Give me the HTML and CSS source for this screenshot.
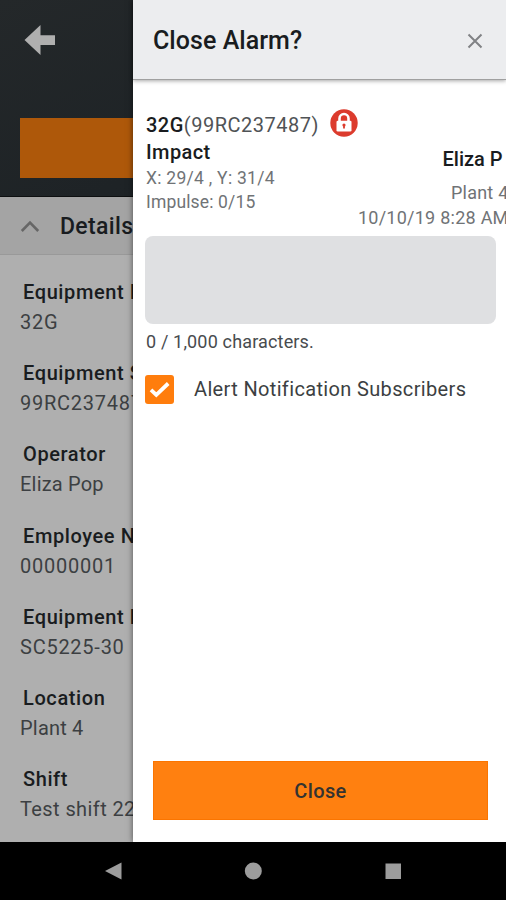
FILE: index.html
```html
<!DOCTYPE html>
<html lang="en">
<head>
<meta charset="utf-8">
<title>Close Alarm</title>
<link rel="stylesheet" href="styles.css">
</head>
<body>
<div class="screen">
  <div class="app">
    <div class="page">
      <div class="hero">
        <svg class="back" width="32" height="32" viewBox="0 0 32 32"><path d="M.5 16 16.500 1V11.200H31V21H16.500V31Z"/></svg>
        <div class="hero-action"></div>
      </div>
      <div class="section-head">
        <svg class="chevron" width="20" height="13" viewBox="0 0 20 13"><path d="M1.8 11 10 2.7 18.2 11"/></svg>
        <span class="section-title">Details</span>
      </div>
      <dl class="fields">
        <div class="field"><dt>Equipment ID</dt><dd class="code">32G</dd></div>
        <div class="field"><dt>Equipment Serial</dt><dd class="code">99RC237487</dd></div>
        <div class="field"><dt>Operator</dt><dd>Eliza Pop</dd></div>
        <div class="field"><dt>Employee Number</dt><dd class="code">00000001</dd></div>
        <div class="field"><dt>Equipment Model</dt><dd class="code">SC5225-30</dd></div>
        <div class="field"><dt>Location</dt><dd>Plant 4</dd></div>
        <div class="field"><dt>Shift</dt><dd class="wide">Test shift 22</dd></div>
      </dl>
    </div>
    <section class="drawer">
      <header class="drawer-head">
        <h1>Close Alarm?</h1>
        <svg class="dismiss" width="16" height="16" viewBox="0 0 16 16"><path d="M1.5 1.5 14.5 14.5M14.5 1.5 1.5 14.5"/></svg>
      </header>
      <div class="summary">
        <div class="left">
          <div class="equipment"><span><b>32G</b>(99RC237487)</span>
            <svg class="lock" width="28" height="28" viewBox="0 0 28 28"><circle cx="14" cy="14" r="13.7" fill="#dc3b2d"/><path d="M9.5 13V9.500a4.500 4.500 0 0 1 9 0V13" fill="none" stroke="#fff" stroke-width="2.6"/><rect x="6.500" y="11.800" width="15" height="10.700" rx="1.3" fill="#fff"/><circle cx="14" cy="16" r="1.6" fill="#dc3b2d"/><path d="M13.100 16h1.8v3.5h-1.8z" fill="#dc3b2d"/></svg>
          </div>
          <div class="kind">Impact</div>
          <div class="axes">X: 29/4 , Y: 31/4</div>
          <div class="impulse">Impulse: 0/15</div>
        </div>
        <div class="right">
          <div class="person">Eliza P</div>
          <div class="site">Plant 4</div>
          <div class="date">10/10/19 8:28 AM</div>
        </div>
      </div>
      <div class="comment"></div>
      <div class="count">0 / 1,000 characters.</div>
      <div class="notify">
        <span class="check"><svg width="29" height="29" viewBox="0 0 29 29"><path d="M6 14.800 11.300 19.800 23.200 8.500"/></svg></span>
        <span class="notify-label">Alert Notification Subscribers</span>
      </div>
      <div class="submit"><span>Close</span></div>
    </section>
  </div>
  <nav class="system">
    <svg width="506" height="58" viewBox="0 0 506 58"><path d="M105 29 121.500 20.500V37.500Z"/><circle cx="253.300" cy="29" r="8.500"/><rect x="385.500" y="21.500" width="15.500" height="15.500"/></svg>
  </nav>
</div>
</body>
</html>
```
FILE: styles.css
```css
* { box-sizing: border-box; }
body { margin: 0; font-family: Roboto, "Liberation Sans", sans-serif; color: #191c20; }
h1, dl, dd { margin: 0; }
.screen { width: 506px; height: 900px; display: flex; flex-direction: column; background: #000; overflow: hidden; }
.app { height: 842px; position: relative; overflow: hidden; }
.page { height: 100%; background: #afafaf; }
.hero { height: 197px; padding: 24px 0 0 24px; border-bottom: 1px solid #0d0f10; background: linear-gradient(155deg, #24282a 0%, #1e2326 55%, #1b2125 100%); overflow: hidden; }
.back { display: block; fill: #afafaf; }
.hero-action { margin: 62px 0 0 -4px; height: 60px; background: #ae580a; }
.section-head { height: 58px; display: flex; align-items: center; padding: 1px 0 0 20px; background: #a4a4a4; border-bottom: 1px solid #999; }
.chevron { fill: none; stroke: #666; stroke-width: 2.6; margin-top: 1px; }
.section-title { margin-left: 20px; font-size: 23px; font-weight: 500; letter-spacing: .35px; }
.fields { padding: 22px 0 0 20px; }
.field { height: 81.2px; white-space: nowrap; }
dt { padding-left: 3px; font-size: 20px; line-height: 30px; font-weight: 500; letter-spacing: .6px; }
dd { font-size: 20px; line-height: 30px; font-weight: 400; color: #3c3f42; letter-spacing: .2px; }
.code { letter-spacing: .75px; }
.wide { letter-spacing: .4px; }
.drawer { position: absolute; top: 0; left: 133px; right: 0; bottom: 0; background: #fff; box-shadow: 0 0 6px rgba(0,0,0,.55); }
.drawer-head { height: 80px; display: flex; align-items: center; justify-content: space-between; padding: 2px 23px 0 20px; background: #ecedef; border-bottom: 1px solid #a0a0a0; box-shadow: 0 1px 4px rgba(0,0,0,.35); }
h1 { font-size: 25px; font-weight: 500; letter-spacing: .05px; }
.dismiss { fill: none; stroke: #808285; stroke-width: 2; }
.summary { height: 156px; display: flex; justify-content: space-between; padding: 28px 4px 0 13px; white-space: nowrap; }
.equipment { height: 30px; display: flex; align-items: center; font-size: 20px; color: #505356; letter-spacing: .5px; }
.equipment span { padding-top: 4px; }
.equipment b { font-weight: 500; color: #191c20; }
.lock { margin: -1px 0 0 11px; }
.kind { font-size: 20px; line-height: 28px; font-weight: 500; letter-spacing: .4px; }
.axes, .impulse { font-size: 17.500px; line-height: 24px; color: #707376; }
.axes { letter-spacing: .27px; }
.impulse { letter-spacing: .15px; }
.right { display: flex; flex-direction: column; align-items: flex-end; padding-top: 36px; }
.person { font-size: 20px; line-height: 30px; font-weight: 500; margin-right: 6px; }
.site, .date { font-size: 18px; line-height: 25px; color: #707376; letter-spacing: .25px; }
.site { margin-top: 6px; }
.comment { margin: 0 10px 0 12px; height: 88px; border-radius: 8px; background: #dfe0e2; }
.count { margin: 6px 0 0 13px; font-size: 18px; line-height: 24px; color: #484b4e; letter-spacing: .16px; }
.notify { display: flex; align-items: center; height: 30px; margin: 20px 0 0 12px; }
.check { width: 29px; height: 29px; border-radius: 3px; background: #ff7d0d; }
.check svg { display: block; fill: none; stroke: #fff; stroke-width: 3.8; }
.notify-label { margin-left: 20px; font-size: 20px; color: #3c3f42; letter-spacing: .35px; white-space: nowrap; }
.submit { margin: 357px 18px 0 20px; height: 59px; display: flex; align-items: center; justify-content: center; background: #ff8010; border: 1px solid #fb7500; color: #343330; font-size: 20px; font-weight: 500; letter-spacing: .35px; }
.system { height: 58px; background: #000; }
.system svg { display: block; fill: #9c9c9c; }
```
